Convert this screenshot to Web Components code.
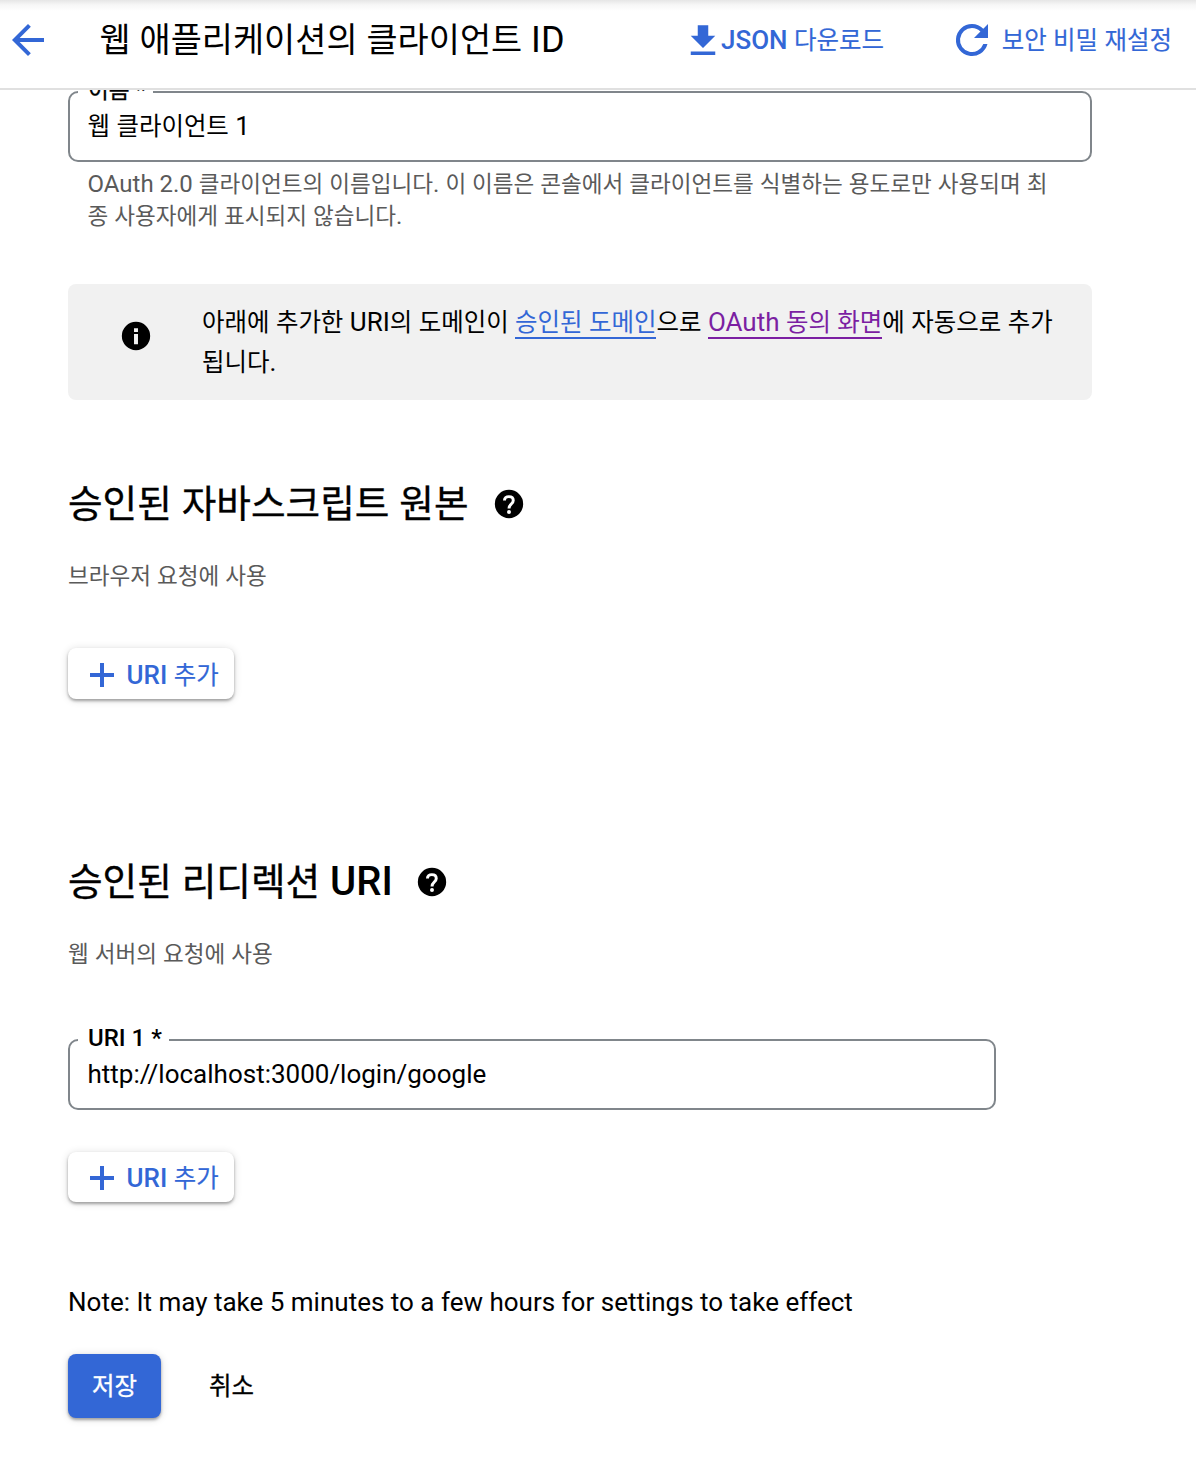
<!DOCTYPE html>
<html lang="ko">
<head>
<meta charset="utf-8">
<title>웹 애플리케이션의 클라이언트 ID</title>
<style>
html,body{margin:0;padding:0;background:#fff}
body{width:1196px;height:1474px;overflow:hidden;color:#000;font-family:Roboto,"Noto Sans CJK KR",sans-serif}
</style>
</head>
<body>
<client-page></client-page>
<script>
// Hangul is set slightly smaller than the Latin text beside it.
const ko = t => t.replace(/[\uac00-\ud7a3]+/g, '<span class="k">$&</span>');
const base = `*{box-sizing:border-box}.k{font-size:.9405em;font-weight:400;line-height:0;font-family:"Noto Sans CJK KR",sans-serif;-webkit-text-stroke:var(--ko-stroke,0)}svg{display:block;flex:none;fill:currentColor}`;
const define = (name, css, html) => customElements.define(name, class extends HTMLElement {
  constructor() {
    super();
    this.attachShadow({mode: 'open'});
  }
  connectedCallback() {
    this.shadowRoot.innerHTML = `<style>${base}${css}</style>${html(this)}`;
  }
});
const icons = {
  back: '<path d="M20 11H7.83l5.59-5.59L12 4l-8 8 8 8 1.41-1.41L7.83 13H20v-2z"/>',
  download: '<path d="M19 9h-4V3H9v6H5l7 7 7-7zM5 18v2h14v-2H5z"/>',
  refresh: '<path d="M17.65 6.35A7.96 7.96 0 0 0 12 4a8 8 0 1 0 7.73 10h-2.08A6 6 0 1 1 12 6c1.66 0 3.14.69 4.22 1.78L13 11h7V4l-2.35 2.35z"/>',
  add: '<path d="M11 6h2v5h5v2h-5v5h-2v-5H6v-2h5z"/>',
  info: '<path fill-rule="evenodd" d="M12 2a10 10 0 1 0 0 20 10 10 0 0 0 0-20zm1.4 15.8h-2.8v-7.2h2.8v7.2zm0-8.6h-2.8V6.5h2.8v2.7z"/>',
  help: '<circle cx="12" cy="12" r="10"/><path d="M8.8 9.6c0-1.7 1.3-2.8 3.1-2.8 1.9 0 3.1 1.1 3.1 2.7 0 2.5-3 2.6-3 5.6" fill="none" stroke="#fff" stroke-width="2.1"/><circle cx="12" cy="17.6" r="1.4" fill="#fff"/>'
};
define('g-icon', ':host{display:block;flex:none}svg{width:var(--size,24px);height:var(--size,24px)}',
  e => `<svg viewBox="0 0 24 24">${icons[e.getAttribute('name')]}</svg>`);

define('page-header', `
:host{display:flex;align-items:center;height:90px;padding:0 24px 8px 8px;border-bottom:2px solid #e0e0e0;background:linear-gradient(#e6e6e6,#f7f7f7 5px,#fff 11px)}
g-icon{color:#3367d6}
.back{--size:48px;margin:0 0 0 -4px}
h1{margin:0 0 0 47.5px;width:582.5px;font:400 36px/48px Roboto,sans-serif;white-space:nowrap}
.act{--ko-stroke:.15px;display:flex;align-items:center;color:#3367d6;font:500 26px/40px Roboto,sans-serif;white-space:nowrap}
.act g-icon{--size:42px;margin:2px -3px 0 0}
.act.r{margin-left:auto}.act.r g-icon{--size:48px;margin:0 6px 0 0}
`, () => `<g-icon class="back" name="back"></g-icon><h1>${ko('웹 애플리케이션의 클라이언트 ID')}</h1>
<div class="act"><g-icon name="download"></g-icon><span>${ko('JSON 다운로드')}</span></div>
<div class="act r"><g-icon name="refresh"></g-icon><span>${ko('보안 비밀 재설정')}</span></div>`);

define('text-field', `
:host{display:block;position:relative;height:71px;border:2px solid #80868b;border-radius:10px;padding:13px 17.5px;font:400 26px/40px Roboto,sans-serif}
label{--ko-stroke:.3px;position:absolute;left:8px;top:-19px;padding:0 7px 0 10px;background:#fff;font:500 24px/32px Roboto,sans-serif;white-space:nowrap}
`, e => `<label>${ko(e.getAttribute('label'))}</label><div>${ko(e.getAttribute('value'))}</div>`);

define('info-banner', `
:host{display:flex;height:116px;padding:18px 30px 18px 51px;background:#f1f1f1;border-radius:8px;font:400 26px/40px Roboto,sans-serif}
g-icon{--size:34px;margin:17px 49px 0 0}
p{margin:0;white-space:nowrap}
a{color:#3367d6;border-bottom:2px solid}
a.seen{color:#7b1fa2}
`, () => `<g-icon name="info"></g-icon><p>${ko('아래에 추가한 URI의 도메인이 ')}<a>${ko('승인된 도메인')}</a>${ko('으로 ')}<a class="seen">${ko('OAuth 동의 화면')}</a>${ko('에 자동으로 추가')}<br>${ko('됩니다.')}</p>`);

define('section-title', `
:host{display:block}
h2{--ko-stroke:.35px;display:flex;align-items:center;margin:0;font:500 40px/56px Roboto,sans-serif;white-space:pre}
g-icon{--size:34px;margin-left:var(--icon-gap,23px)}
p{margin:28px 0 0;color:#5a5a5a;font:400 24px/32px Roboto,sans-serif}
`, e => `<h2><span>${ko(e.getAttribute('heading'))}</span><g-icon name="help"></g-icon></h2><p>${ko(e.getAttribute('note'))}</p>`);

define('add-button', `
:host{--ko-stroke:.15px;display:flex;align-items:center;width:166px;height:51px;padding:3px 0 0 16px;border-radius:8px;background:#fff;color:#3367d6;box-shadow:0 2px 3px rgba(0,0,0,.32),0 1px 8px rgba(0,0,0,.14);font:500 26px/40px Roboto,sans-serif;white-space:nowrap}
g-icon{--size:48px;margin:0 .5px 0 -6px}
`, () => `<g-icon name="add"></g-icon><span>${ko('URI 추가')}</span>`);

define('form-actions', `
:host{--ko-stroke:.3px;display:flex;align-items:center;gap:48px;font:500 26px/40px Roboto,sans-serif}
.save{display:flex;align-items:center;justify-content:center;width:93px;height:64px;border-radius:8px;background:#3367d6;color:#fff;box-shadow:0 2px 3px rgba(0,0,0,.32),0 1px 8px rgba(0,0,0,.14)}
`, () => `<div class="save"><span>${ko('저장')}</span></div><span>${ko('취소')}</span>`);

define('client-page', `
:host{display:flex;flex-direction:column;height:1474px}
main{flex:1;min-height:0;overflow:hidden;display:flex;flex-direction:column;padding:1px 104px 0 68px}
.help{margin:6px 0 0;padding:0 19.5px;height:64px;color:#5a5a5a;font:400 24px/32px Roboto,sans-serif;white-space:nowrap}
info-banner{margin-top:52px}
.s1{margin-top:76px;--icon-gap:23.5px}.b1{margin-top:56px}
.s2{margin-top:155px;--icon-gap:22px}.f2{margin:69px 96px 0 0}
.b2{margin-top:42px;height:50px;padding-top:2px}
.note{margin:80px 0 0;font:400 26px/40px Roboto,sans-serif}
form-actions{margin-top:32px}
`, () => `<page-header></page-header><main>
<text-field label="이름 *" value="웹 클라이언트 1"></text-field>
<p class="help">${ko('OAuth 2.0 클라이언트의 이름입니다. 이 이름은 콘솔에서 클라이언트를 식별하는 용도로만 사용되며 최')}<br>${ko('종 사용자에게 표시되지 않습니다.')}</p>
<info-banner></info-banner>
<section-title class="s1" heading="승인된 자바스크립트 원본" note="브라우저 요청에 사용"></section-title>
<add-button class="b1"></add-button>
<section-title class="s2" heading="승인된 리디렉션 URI" note="웹 서버의 요청에 사용"></section-title>
<text-field class="f2" label="URI 1 *" value="http://localhost:3000/login/google"></text-field>
<add-button class="b2"></add-button>
<p class="note">Note: It may take 5 minutes to a few hours for settings to take effect</p>
<form-actions></form-actions>
</main>`);
</script>
</body>
</html>
